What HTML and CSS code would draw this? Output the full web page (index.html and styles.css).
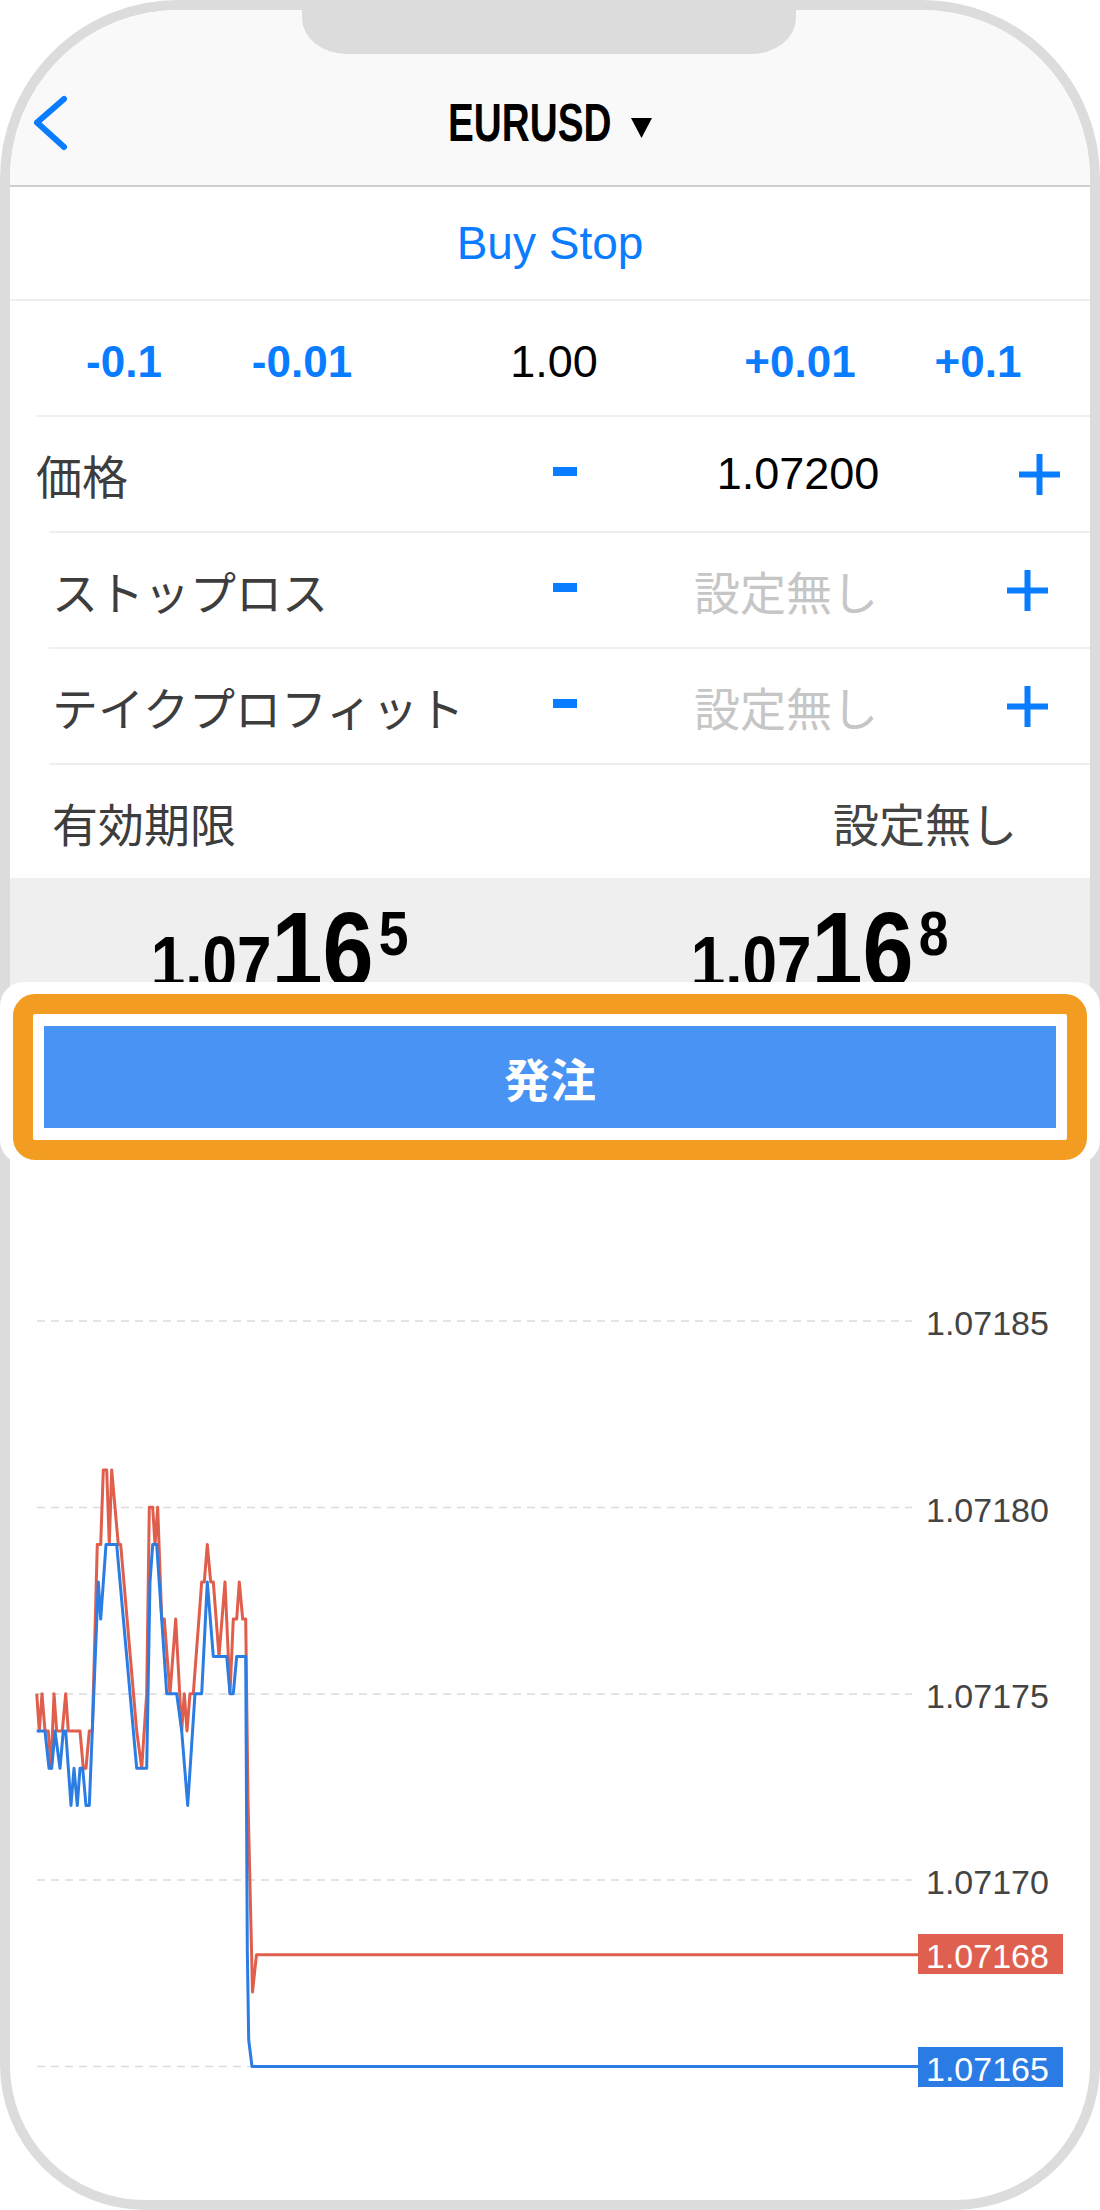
FILE: index.html
```html
<!DOCTYPE html>
<html lang="ja">
<head>
  <meta charset="UTF-8">
  <meta name="viewport" content="width=device-width, initial-scale=1">
  <title>EURUSD 注文</title>
  <link rel="stylesheet" href="styles.css">
</head>
<body>

  <div class="device">
    <div class="phone">
      <div class="notch"></div>

      <!-- Navigation bar -->
      <header class="nav">
        <svg class="back" width="36" height="56" viewBox="0 0 36 56">
          <path d="M31 4 L4 27.5 L31 52" fill="none" stroke="#0a7cff" stroke-width="6" stroke-linecap="round" stroke-linejoin="round"/>
        </svg>
        <div class="title">
          <span class="symbol">EURUSD</span>
          <svg class="caret" width="21" height="20" viewBox="0 0 21 20"><polygon points="0,0 21,0 10.5,20" fill="#000"/></svg>
        </div>
        <div></div>
      </header>

      <div class="type-row">Buy Stop</div>

      <div class="volume-row">
        <span class="step">-0.1</span>
        <span class="step">-0.01</span>
        <span class="volume">1.00</span>
        <span class="step">+0.01</span>
        <span class="step">+0.1</span>
      </div>

      <div class="field field-price">
        <span class="label">価格</span>
        <span class="minus"></span>
        <span class="value">1.07200</span>
        <svg class="plus" width="41" height="41" viewBox="0 0 41 41"><path d="M20.5 0V41M0 20.5H41" stroke="#0a7cff" stroke-width="6"/></svg>
      </div>

      <div class="field">
        <span class="label">ストップロス</span>
        <span class="minus"></span>
        <span class="value empty">設定無し</span>
        <svg class="plus" width="41" height="41" viewBox="0 0 41 41"><path d="M20.5 0V41M0 20.5H41" stroke="#0a7cff" stroke-width="6"/></svg>
      </div>

      <div class="field">
        <span class="label">テイクプロフィット</span>
        <span class="minus"></span>
        <span class="value empty">設定無し</span>
        <svg class="plus" width="41" height="41" viewBox="0 0 41 41"><path d="M20.5 0V41M0 20.5H41" stroke="#0a7cff" stroke-width="6"/></svg>
      </div>

      <div class="expiry-row">
        <span class="label">有効期限</span>
        <span class="expiry">設定無し</span>
      </div>

      <!-- Bid / Ask -->
      <div class="quotes">
        <div class="quote">
          <span class="price"><span class="p-lo">1.07</span><span class="p-hi">16</span><span class="p-pt">5</span></span>
        </div>
        <div class="quote">
          <span class="price"><span class="p-lo">1.07</span><span class="p-hi">16</span><span class="p-pt">8</span></span>
        </div>
      </div>

      <!-- Tick chart -->
      <svg class="chart" width="1080" height="1082" viewBox="10 1118 1080 1082">
        <g class="grid">
          <line x1="37" y1="1321" x2="912" y2="1321"/>
          <line x1="37" y1="1507.5" x2="912" y2="1507.5"/>
          <line x1="37" y1="1694" x2="912" y2="1694"/>
          <line x1="37" y1="1880" x2="912" y2="1880"/>
          <line x1="37" y1="2066.5" x2="912" y2="2066.5"/>
        </g>
        <text class="axis-label" x="926" y="1335">1.07185</text>
        <text class="axis-label" x="926" y="1521.5">1.07180</text>
        <text class="axis-label" x="926" y="1708">1.07175</text>
        <text class="axis-label" x="926" y="1894">1.07170</text>

        <polyline class="ask-line" points="36.7,1693.7 39.3,1731 42,1693.7 45,1731 48.3,1731 51,1768.3 54,1693.7 56.7,1731 62.3,1731 65.7,1693.7 68.3,1731 80,1731 83.3,1768.3 86,1768.3 89.3,1731 92.3,1731 97.3,1544.6 100.7,1544.6 103.3,1470 106.7,1470 109.3,1544.6 111.7,1470 118.3,1544.6 120.7,1544.6 136.7,1731 141.7,1768.3 146.7,1693.7 149.3,1507.3 152.7,1507.3 155,1544.6 157.7,1507.3 161.7,1619.1 164.3,1619.1 170,1693.7 175.7,1619.1 181.7,1731 184.3,1693.7 187,1731 190,1693.7 193.3,1693.7 201.7,1581.9 204.3,1581.9 207.3,1544.6 210.7,1581.9 213.3,1581.9 219,1656.4 225,1581.9 230,1693.7 233.3,1619.1 236.7,1619.1 239.3,1581.9 242.7,1619.1 245.7,1619.1 248,1800 252.5,1992 256.5,1954.7 918,1954.7"/>
        <polyline class="bid-line" points="36.7,1731 45,1731 49,1768.3 51.7,1768.3 55,1731 60,1768.3 63.3,1731 65.7,1731 71,1805.5 74,1768.3 77.3,1805.5 80,1768.3 82.7,1768.3 86,1805.5 89.3,1805.5 98.3,1581.9 100.7,1619.1 106,1544.6 116.7,1544.6 126.7,1656.4 136.7,1768.3 146.7,1768.3 150,1581.9 152.7,1544.6 156.7,1544.6 161.7,1619.1 166.7,1693.7 176.7,1693.7 181.7,1731 187.7,1805.5 195,1693.7 201.7,1693.7 207.3,1581.9 213.3,1656.4 226.7,1656.4 230,1693.7 233.3,1693.7 236.7,1656.4 245.7,1656.4 247.3,1950 248.7,2040 252,2066.5 918,2066.5"/>

        <rect class="ask-tag" x="918" y="1934" width="145" height="40"/>
        <text class="tag-label" x="926" y="1968">1.07168</text>
        <rect class="bid-tag" x="918" y="2047" width="145" height="40"/>
        <text class="tag-label" x="926" y="2080.5">1.07165</text>
      </svg>
    </div>

    <!-- Highlighted order button -->
    <div class="order-overlay">
      <div class="order-frame">
        <button class="order-btn">発注</button>
      </div>
    </div>
  </div>

</body>
</html>
```

FILE: styles.css
```css
* {
  box-sizing: border-box;
}
body {
  margin: 0;
  background-color: #fff;
  font-family: "Liberation Sans", "Noto Sans CJK JP", sans-serif;
  color: #000;
}
.device {
  position: relative;
  width: 1100px;
  height: 2210px;
}
.phone {
  position: relative;
  width: 1100px;
  height: 2210px;
  border: 10px solid #dcdcdc;
  border-radius: 178px 178px 145px 145px;
  overflow: hidden;
  background-color: #fff;
}
.notch {
  position: absolute;
  top: 0;
  left: 292px;
  width: 494px;
  height: 44px;
  background-color: #dcdcdc;
  border-radius: 0 0 45px 45px / 0 0 36px 36px;
}

/* nav bar */
.nav {
  height: 177px;
  padding-top: 50px;
  background-color: #f9f9f9;
  border-bottom: 2px solid #cfcfcf;
  display: grid;
  grid-template-columns: 1fr auto 1fr;
  align-items: center;
}
.back {
  display: block;
  margin-left: 23px;
}
.title {
  display: flex;
  align-items: center;
}
.symbol {
  display: inline-block;
  width: 163px;
  white-space: nowrap;
  font-size: 53px;
  font-weight: bold;
  line-height: 1;
  transform: scaleX(0.73);
  transform-origin: left center;
}
.caret {
  display: block;
  margin-left: 20px;
  margin-top: 10px;
}

/* order type */
.type-row {
  height: 114px;
  border-bottom: 2px solid #efefef;
  display: flex;
  align-items: center;
  justify-content: center;
  font-size: 46px;
  color: #0a7cff;
}

/* volume */
.volume-row {
  height: 116px;
  margin-left: 26px;
  padding-top: 8px;
  border-bottom: 2px solid #efefef;
  display: grid;
  grid-template-columns: 176px 180px 324px 168px 188px;
  align-items: center;
  text-align: center;
}
.step {
  font-size: 44px;
  font-weight: bold;
  color: #0a7cff;
}
.volume {
  font-size: 45px;
}

/* price / SL / TP */
.field {
  height: 116px;
  margin-left: 39px;
  border-bottom: 2px solid #efefef;
  display: grid;
  grid-template-columns: 486px 60px 382px 100px;
  align-items: center;
}
.field-price {
  grid-template-columns: 486px 60px 406px 76px;
}
.label {
  font-size: 46px;
  color: #3d3d3d;
  padding-left: 3px;
  white-space: nowrap;
}
.field-price .label {
  padding-left: 0;
  margin-left: -13px;
}
.minus {
  justify-self: center;
  width: 24px;
  height: 9px;
  margin-bottom: 6px;
  background-color: #0a7cff;
}
.value {
  text-align: center;
  font-size: 45px;
}
.value.empty {
  font-size: 46px;
  color: #c6c6c6;
}
.plus {
  justify-self: center;
  display: block;
}
.expiry-row {
  height: 113px;
  margin-left: 39px;
  padding: 0 73px 0 3px;
  display: flex;
  align-items: center;
  justify-content: space-between;
}
.expiry-row .label {
  padding-left: 0;
}
.expiry {
  font-size: 46px;
  color: #444;
}

/* bid / ask band */
.quotes {
  height: 240px;
  background-color: #efefef;
  display: flex;
}
.quote {
  flex: 1;
  display: flex;
  justify-content: center;
  padding-top: 18px;
}
.price {
  display: flex;
  align-items: baseline;
  font-weight: bold;
  line-height: 1;
  transform: scaleX(0.85);
}
.p-lo {
  font-size: 73px;
}
.p-hi {
  font-size: 108px;
}
.p-pt {
  font-size: 63px;
  align-self: flex-start;
  margin-top: 6px;
  margin-left: 6px;
}

/* chart */
.chart {
  display: block;
}
.grid line {
  stroke: #dcdcdc;
  stroke-width: 1.5;
  stroke-dasharray: 8 6;
}
.axis-label {
  font-family: "Liberation Sans", sans-serif;
  font-size: 34px;
  fill: #444;
}
.tag-label {
  font-family: "Liberation Sans", sans-serif;
  font-size: 34px;
  fill: #fff;
}
.ask-line,
.bid-line {
  fill: none;
  stroke-width: 3;
  stroke-linejoin: round;
}
.ask-line {
  stroke: #e05e4c;
}
.bid-line {
  stroke: #2b7de3;
}
.ask-tag {
  fill: #e0604f;
}
.bid-tag {
  fill: #2a7be4;
}

/* order button overlay */
.order-overlay {
  position: absolute;
  top: 982px;
  left: 0;
  width: 1100px;
  height: 182px;
  padding: 12px 13px 4px;
  background-color: #fff;
  border-radius: 24px;
}
.order-frame {
  height: 166px;
  padding: 12px 11px;
  border: 20px solid #f39c22;
  border-radius: 22px;
  background-color: #fff;
}
.order-btn {
  display: block;
  width: 100%;
  height: 102px;
  border: none;
  background-color: #4893f4;
  color: #fff;
  font-family: "Liberation Sans", "Noto Sans CJK JP", sans-serif;
  font-size: 46px;
  font-weight: bold;
}
```
